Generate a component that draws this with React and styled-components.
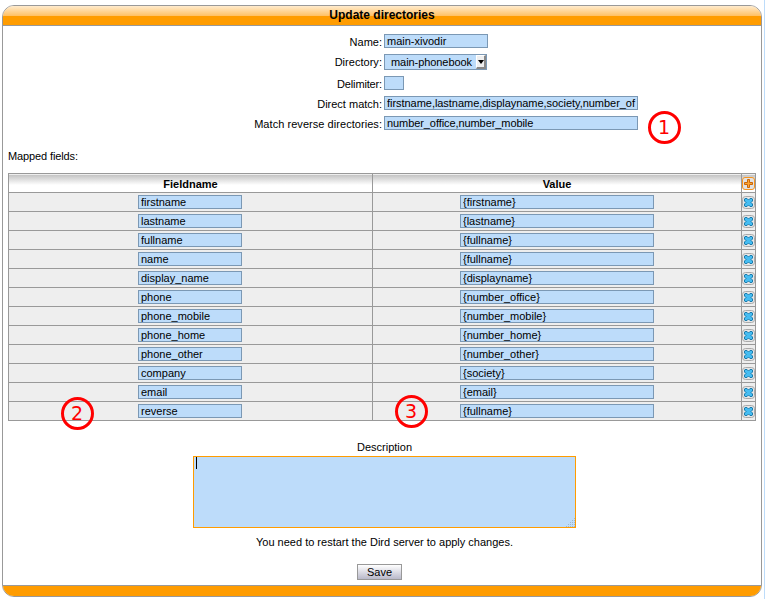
import React from "react";
import styled, { createGlobalStyle } from "styled-components";

const Global = createGlobalStyle`
  * { box-sizing: border-box; }
  body { margin: 0; background: #fff; overflow: hidden; font: 11px/13px "Liberation Sans", Arial, sans-serif; color: #000; }
`;
const Page = styled.div`
  position: relative; width: 765px; height: 599px; padding: 5px 0 0 2px;
  border-right: 1px solid #bddcfa;
`;
const Panel = styled.section`
  width: 760px; height: 592px; border: 1px solid #999; border-radius: 12px;
  overflow: hidden; display: flex; flex-direction: column;
`;
const Title = styled.h3`
  margin: 0; height: 20px; flex: none; font-size: 12px; line-height: 18px; text-align: center;
  border-bottom: 1px solid #999;
  background: linear-gradient(#ffebcd 0, #ffc063 10px, #ff9c00 10px);
`;
const Footer = styled.div`
  height: 11px; flex: none; border-top: 1px solid #999; background: #ff9c00;
`;
const Body = styled.div` flex: 1; padding: 8px 5px 0; `;
const Form = styled.div`
  display: grid; grid-template-columns: 374px 1fr; column-gap: 2px;
  grid-template-rows: 20px 22px 20px 20px 20px;
`;
const Label = styled.label`
  text-align: right; line-height: 15px; padding-top: 1px; letter-spacing: ${p => p.$spacing || 0}px;
`;
const Field = styled.input`
  display: block; width: ${p => p.$w || 104}px; height: 14px; margin: 0; padding: 0 0 0 2px;
  border: 1px solid #7b98b4; border-radius: 0; background: #bddcfa; color: #000; outline: 0;
  font: 11px/12px "Liberation Sans", Arial, sans-serif; letter-spacing: ${p => p.$spacing || 0}px;
`;
const Select = styled.div`
  display: flex; justify-content: space-between; width: 103px; height: 16px; padding-left: 6px;
  border: 1px solid #7b98b4; background: #bddcfa; line-height: 14px; letter-spacing: -0.07px;
`;
const Arrow = styled.span`
  width: 10px; height: 14px; display: flex; align-items: center; justify-content: center;
  background: #efefef; border: solid; border-width: 1px 2px 2px 1px; border-color: #fff #888 #888 #fff;
`;
const ArrowGlyph = styled.svg` flex: none; width: 6px; height: 4px; `;
const Caption = styled.p` margin: 14px 0 10px; line-height: 13px; letter-spacing: -0.12px; `;
const Table = styled.div`
  width: 748px; display: grid; grid-template-columns: 363px 368px 13px; gap: 1px; padding: 1px; background: #999;
`;
const Cell = styled.div`
  height: 18px; display: flex; justify-content: center; padding-top: 2px; background: #eee;
`;
const NameCell = styled(Cell)` padding-right: 1px; `;
const Head = styled(Cell)`
  font-weight: bold; line-height: 17px;
  background: linear-gradient(#eee 0 1px, #c4c4c4 1px, #fff 11px);
`;
const Icon = styled.svg` flex: none; width: 13px; height: 14px; overflow: visible; `;
const Description = styled.div`
  display: flex; flex-direction: column; align-items: center; margin-top: 20px; padding-left: 5px;
`;
const Area = styled.div`
  position: relative; width: 383px; height: 72px; margin-top: 2px; border: 1px solid #ff9c00; background: #bddcfa;
`;
const Caret = styled.i` position: absolute; left: 2px; top: 0; width: 1px; height: 12px; background: #000; `;
const Grip = styled.svg` position: absolute; right: 0; bottom: 0; width: 9px; height: 9px; `;
const Notice = styled.p` margin: 8px 0 15px; line-height: 13px; `;
const Save = styled.button`
  width: 45px; height: 16px; margin-right: 10px; padding: 0; border: 1px solid #999; border-radius: 0;
  background: linear-gradient(#fff, #b9b9ca); color: #000; font: 11px/13px "Liberation Sans", Arial, sans-serif;
`;
const Marker = styled.div`
  position: absolute; left: ${p => p.$x}px; top: ${p => p.$y}px; width: 33px; height: 33px;
  border: 3px solid #f00; border-radius: 50%; color: #f00; text-align: center; padding-right: 1px;
  font: 19px/26px "DejaVu Sans", sans-serif;
`;

const rows = [
  ["firstname", "{firstname}"], ["lastname", "{lastname}"], ["fullname", "{fullname}"],
  ["name", "{fullname}"], ["display_name", "{displayname}"], ["phone", "{number_office}"],
  ["phone_mobile", "{number_mobile}"], ["phone_home", "{number_home}"],
  ["phone_other", "{number_other}"], ["company", "{society}"], ["email", "{email}"],
  ["reverse", "{fullname}"],
];

const AddIcon = () => (
  <Icon viewBox="0 0 13 14">
    <rect x="0.5" y="1.5" width="12" height="12" rx="2.5" fill="#e2e2e2" stroke="#f7941d" />
    <path d="M5.5 3.5h2v3h3v2h-3v3h-2v-3h-3v-2h3z" fill="#ffa530" stroke="#c96508" />
  </Icon>
);
const RemoveIcon = () => (
  <Icon viewBox="0 0 13 14">
    <rect x="0.5" y="1.5" width="12" height="12" rx="3" fill="#e6e6e6" stroke="#aaa" />
    <path d="M3 3.5h2l1.5 1.5L8 3.5h2l.5.5v2L9 7.5 10.500 9v2l-.5.5H8L6.500 10 5 11.500H3l-.5-.5V9L4 7.500 2.500 6V4z" fill="#45bdf2" stroke="#1a7bac" />
  </Icon>
);

export default function App() {
  return (
    <Page>
      <Global />
      <Panel>
        <Title>Update directories</Title>
        <Body>
          <Form>
            <Label>Name:</Label><Field defaultValue="main-xivodir" />
            <Label $spacing={0.03}>Directory:</Label>
            <Select>main-phonebook
              <Arrow><ArrowGlyph viewBox="0 0 6 4"><path d="M0 0h6L3 4z" /></ArrowGlyph></Arrow>
            </Select>
            <Label $spacing={-0.15}>Delimiter:</Label><Field $w={20} />
            <Label>Direct match:</Label>
            <Field $w={254} $spacing={-0.04} defaultValue="firstname,lastname,displayname,society,number_of" />
            <Label $spacing={0.05}>Match reverse directories:</Label>
            <Field $w={254} $spacing={-0.08} defaultValue="number_office,number_mobile" />
          </Form>
          <Caption>Mapped fields:</Caption>
          <Table>
            <Head>Fieldname</Head><Head>Value</Head><Head><AddIcon /></Head>
            {rows.map(([name, value]) => (
              <React.Fragment key={name}>
                <NameCell><Field defaultValue={name} /></NameCell>
                <Cell><Field $w={194} defaultValue={value} /></Cell>
                <Cell><RemoveIcon /></Cell>
              </React.Fragment>
            ))}
          </Table>
          <Description>
            <span>Description</span>
            <Area>
              <Caret />
              <Grip viewBox="0 0 9 9"><path d="M8.500 0v9M6.500 2v7M4.500 4v5M2.500 6v3M.5 8v1" stroke="#9fb6cc" strokeDasharray="1 1" fill="none" /></Grip>
            </Area>
            <Notice>You need to restart the Dird server to apply changes.</Notice>
            <Save>Save</Save>
          </Description>
        </Body>
        <Footer />
      </Panel>
      <Marker $x={648} $y={111}>1</Marker>
      <Marker $x={61} $y={397}>2</Marker>
      <Marker $x={395} $y={395}>3</Marker>
    </Page>
  );
}
